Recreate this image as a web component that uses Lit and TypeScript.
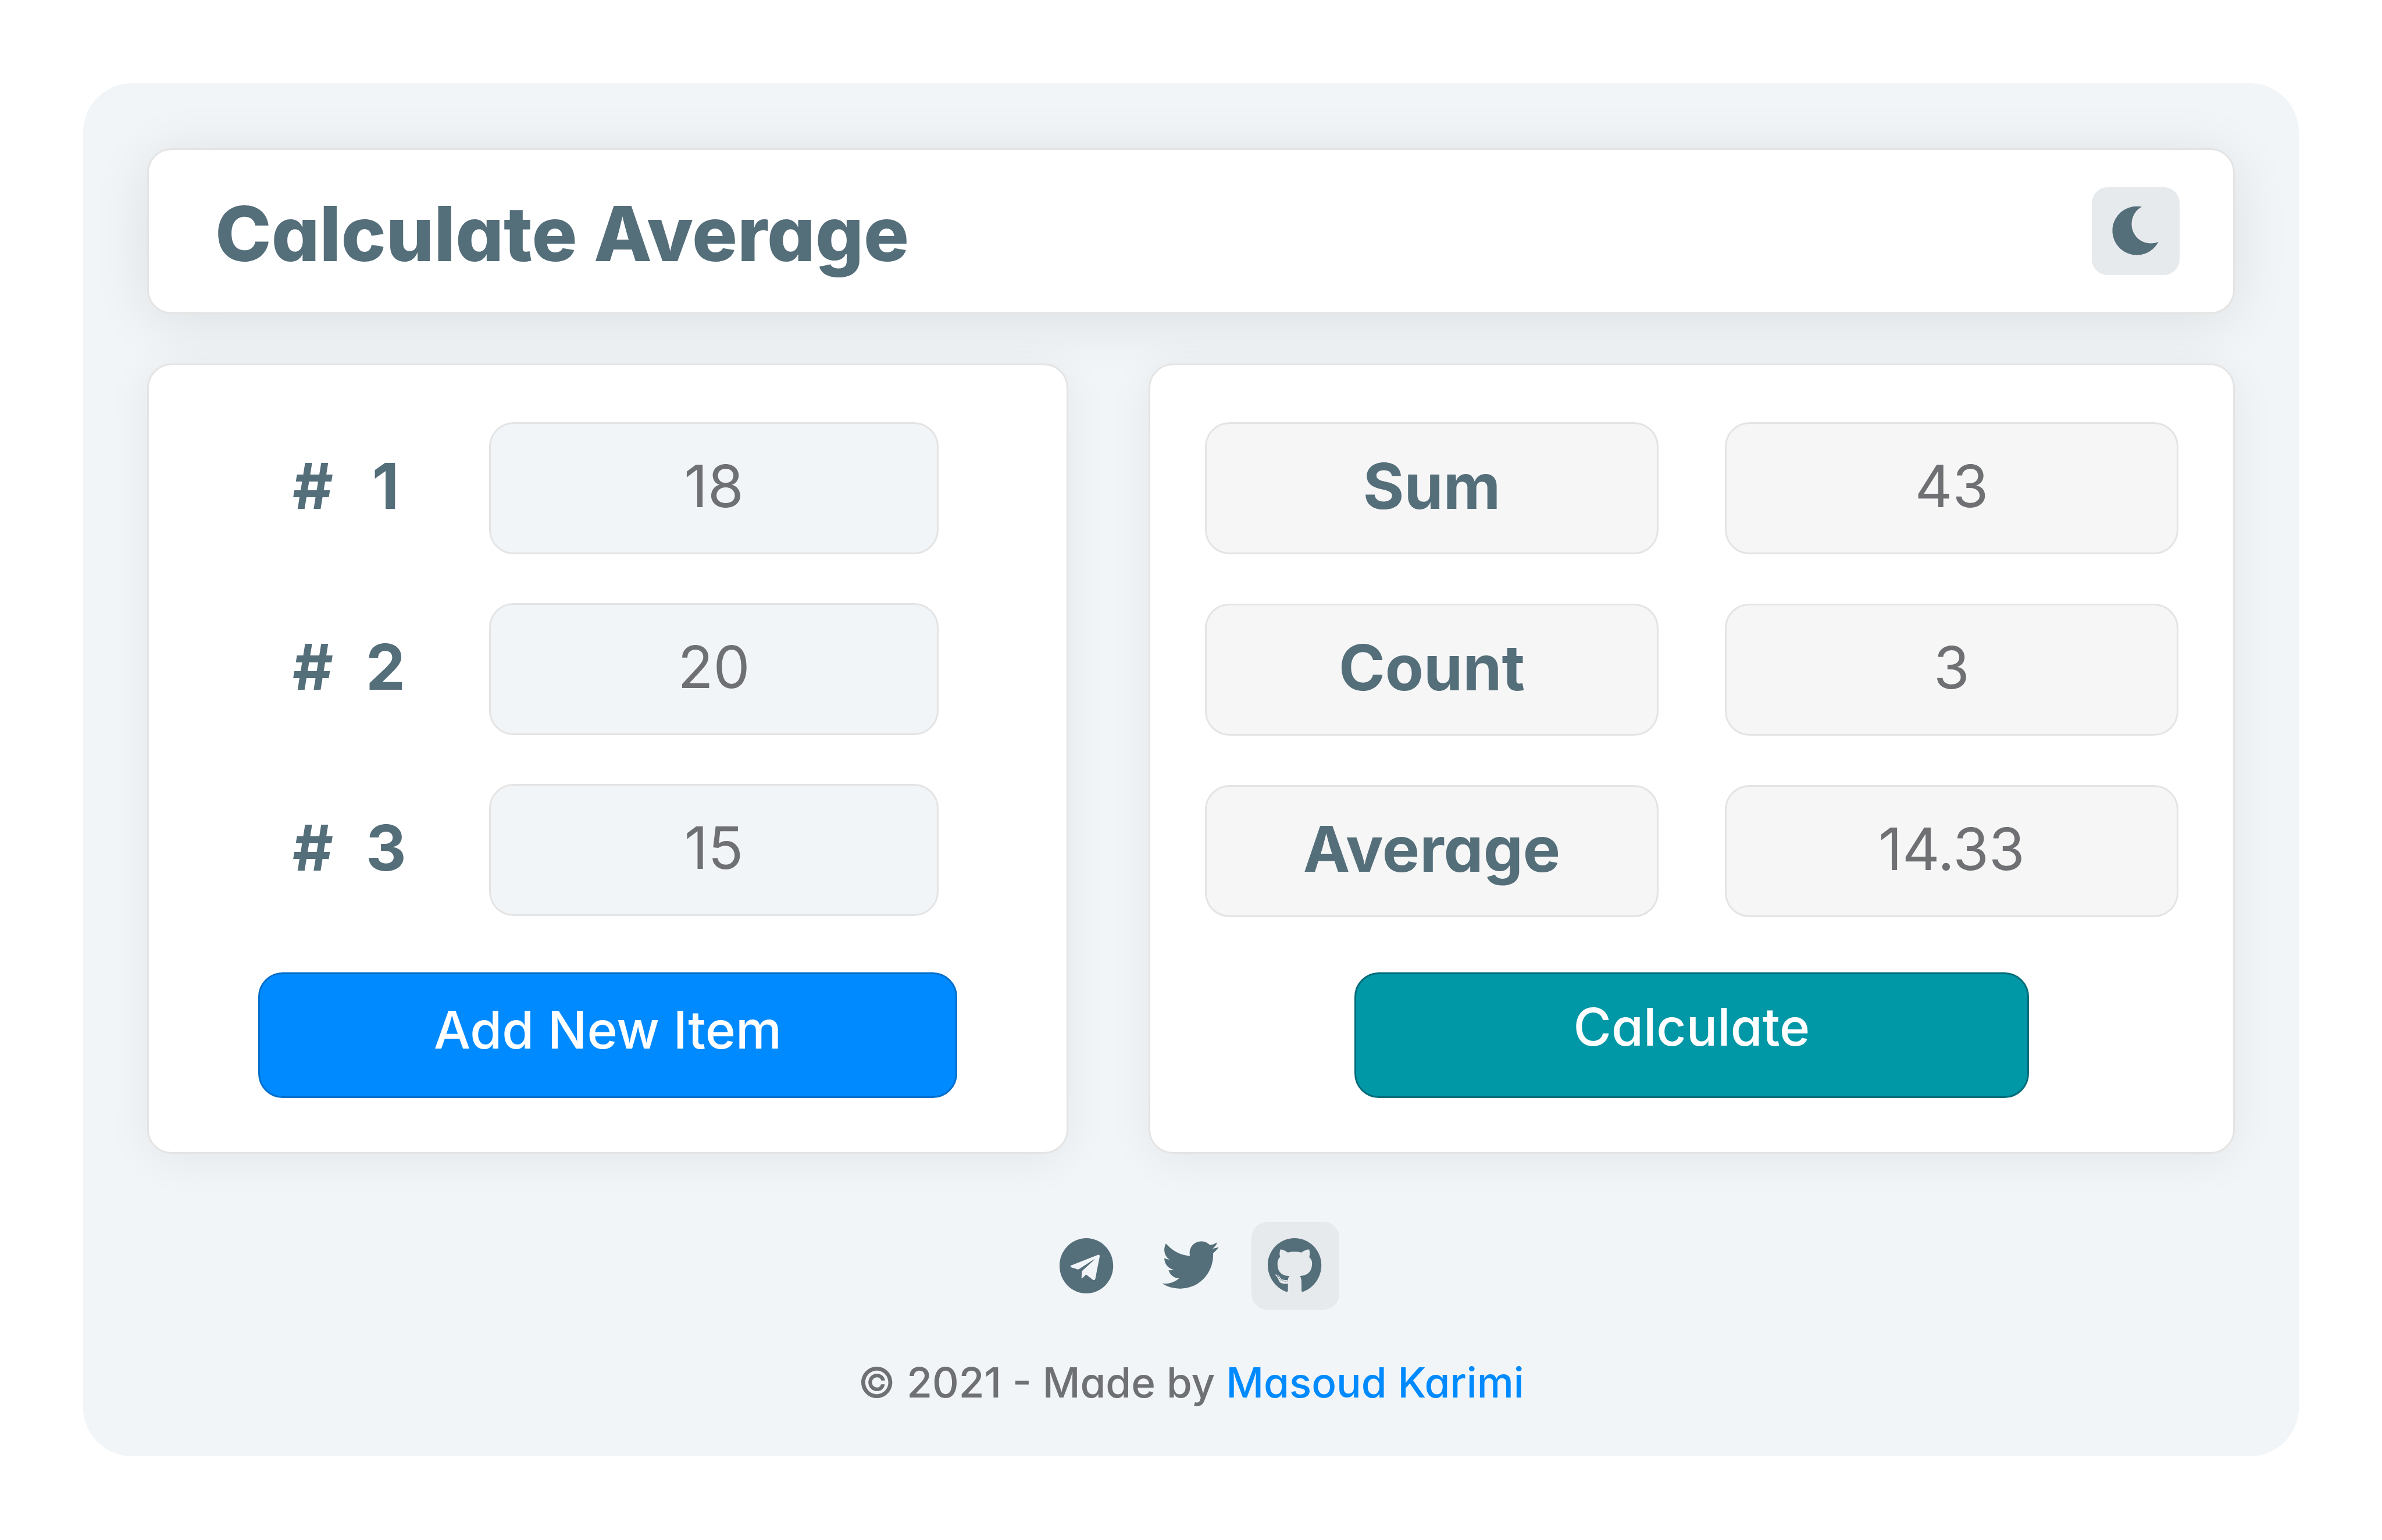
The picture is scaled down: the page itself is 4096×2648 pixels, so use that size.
import { LitElement, html, css, svg } from 'lit';
import { customElement, state } from 'lit/decorators.js';

const moonIcon = svg`<path d="M123 48A60 60 0 1 0 164 134A47 47 0 0 1 98 91C98 73 107 56 123 48Z"/>`;

const telegramIcon = svg`<path fill-rule="evenodd" d="M228 60C337 60 426 151 426 264S337 468 228 468S30 377 30 264S119 60 228 60Z
  M114 262C109 265 109 273 114 275L165 291Q168 292 171 290L284 217C288 215 289 217 287 219L198 300Q195 303 195 306L192 352Q192 359 197 356L223 331Q226 328 229 331L274 366C283 372 292 369 294 359L326 196C328 185 322 181 313 183Z"/>`;

const twitterIcon = svg`<path d="M815 100C860 152 925 188 992 191C990 184 990 176 990 168C990 121 1028 84 1077 84C1101 84 1124 95 1140 112C1159 108 1177 101 1194 91C1187 110 1174 127 1157 138C1174 136 1190 132 1205 126C1194 143 1180 158 1163 171C1170 300 1076 432 918 432C871 432 826 419 788 395C833 399 877 386 912 357C875 356 845 331 834 296C847 298 860 297 872 293C832 285 803 249 803 207C815 213 828 217 841 218C803 192 792 142 815 100Z"/>`;

const githubIcon = svg`<path d="M293 546C215 518 156 440 156 348C156 239 245 150 354 150C463 150 552 239 552 348C552 440 495 518 418 545Q405 547 405 536V487C405 460 404 442 392 430C440 426 483 407 483 335C483 316 475 302 462 290C468 272 468 252 462 235C455 232 435 236 404 256C372 248 337 248 304 256C275 236 255 232 249 235C243 252 242 272 247 290C234 302 228 316 228 340C228 407 268 428 317 430C310 437 306 446 305 458C285 461 262 459 250 444C240 424 224 413 207 421C222 428 230 445 238 462C247 484 270 490 305 486V536Q304 548 293 546Z"/>
  ${[[228, 427], [235, 435], [243, 446], [254, 458], [268, 465], [284, 468], [300, 466]].map(
    ([x, y]) => svg`<circle cx=${x} cy=${y} r="4"/>`,
  )}`;

@customElement('app-root')
export class AppRoot extends LitElement {
  static styles = css`
    :host {
      display: block;
      box-sizing: border-box;
      min-height: 100vh;
      padding: 143px;
      background: #fff;
      color: #6f7073;
      font-family: Inter, 'Open Sans', sans-serif;
      font-feature-settings: 'cv11';
      font-size: 100px;
      line-height: 120px;
    }
    *,
    *::before {
      box-sizing: border-box;
    }
    .panel {
      display: flex;
      flex-direction: column;
      padding: 112px 110px 77px;
      border-radius: 84px;
      background: #f1f5f8;
    }
    .card {
      border: 3px solid #e4e4e4;
      border-radius: 42px;
      background: #fff;
      box-shadow: 0 10px 80px rgba(0, 0, 0, 0.06);
    }
    .header {
      display: flex;
      align-items: center;
      justify-content: space-between;
      padding: 64px 92px 64px 114px;
      box-shadow: 0 12px 100px rgba(0, 0, 0, 0.09);
    }
    .title {
      margin: 0;
      padding-top: 8px;
      color: #546e7a;
      font-size: 130px;
      font-weight: 800;
      line-height: 140px;
    }
    .icon-button {
      display: block;
      width: 151px;
      height: 151px;
      padding: 0;
      border: 0;
      border-radius: 27px;
      background: transparent;
      color: #546e7a;
    }
    .icon-button.active {
      background: #e6eaed;
    }
    .icon {
      display: block;
      width: 100%;
      height: 100%;
      fill: currentColor;
    }
    .columns {
      display: grid;
      grid-template-columns: 1584fr 1868fr;
      gap: 138px;
      margin-top: 85px;
    }
    .column {
      display: flex;
      flex-direction: column;
      align-items: center;
      justify-content: space-between;
      gap: 95px;
      padding: 98px 94px 93px;
    }
    .items {
      display: grid;
      align-self: stretch;
      gap: 84px;
      padding: 0 126px 0 153px;
    }
    .item {
      display: grid;
      grid-template-columns: 338px 1fr;
      align-items: center;
    }
    .results {
      display: grid;
      grid-template-columns: 1fr 1fr;
      align-self: stretch;
      gap: 85px 114px;
    }
    .label {
      color: #546e7a;
      font-size: 108px;
      font-weight: 700;
    }
    .index {
      display: flex;
      gap: 56px;
      padding-bottom: 8px;
    }
    .number {
      min-width: 68px;
      text-align: center;
    }
    .field {
      display: flex;
      align-items: center;
      justify-content: center;
      width: 100%;
      min-width: 0;
      height: 227px;
      padding: 0 24px 8px;
      border: 3px solid #e4e4e4;
      border-radius: 42px;
      background: #f6f6f6;
      text-align: center;
    }
    .entry {
      background: #f1f5f8;
      color: inherit;
      font: inherit;
      font-feature-settings: inherit;
      outline: none;
    }
    .action {
      max-width: 100%;
      height: 216px;
      border: 3px solid;
      border-radius: 42px;
      color: #fff;
      font: inherit;
      font-feature-settings: inherit;
      font-size: 89px;
      font-weight: 500;
    }
    .add {
      width: 1202px;
      padding: 0 0 18px;
      border-color: #006fcc;
      background: #008aff;
    }
    .calculate {
      width: 1160px;
      padding: 0 0 28px;
      border-color: #006d79;
      background: #0097a7;
    }
    .social {
      display: flex;
      justify-content: center;
      gap: 28px;
      margin-top: 117px;
    }
    .credit {
      margin: 75px 0 0;
      font-size: 71px;
      font-weight: 500;
      line-height: 100px;
      text-align: center;
    }
    .credit-link {
      color: #008aff;
      text-decoration: none;
    }
  `;

  @state() private items: string[] = ['18', '20', '15'];
  @state() private sum = 43;
  @state() private count = 3;

  private setItem(index: number, event: Event) {
    const value = (event.target as HTMLInputElement).value;
    this.items = this.items.map((item, i) => (i === index ? value : item));
  }

  private addItem() {
    this.items = [...this.items, ''];
  }

  private calculate() {
    const numbers = this.items.filter((item) => item.trim() !== '').map(Number);
    this.sum = numbers.reduce((total, n) => total + n, 0);
    this.count = numbers.length;
  }

  render() {
    const average = this.count ? (this.sum / this.count).toFixed(2) : '0';
    const results = [
      { id: 'sum', name: 'Sum', value: this.sum },
      { id: 'count', name: 'Count', value: this.count },
      { id: 'average', name: 'Average', value: average },
    ];
    return html`
      <div class="panel">
        <header class="card header">
          <h1 class="title">Calculate Average</h1>
          <button class="icon-button active" type="button" aria-label="Dark mode">
            <svg class="icon" viewBox="0 0 216 216" aria-hidden="true">${moonIcon}</svg>
          </button>
        </header>

        <main class="columns">
          <section class="card column">
            <div class="items">
              ${this.items.map(
                (item, i) => html`
                  <div class="item">
                    <label class="label index" for="item-${i}"><span>#</span><span class="number">${i + 1}</span></label>
                    <input
                      class="field entry"
                      id="item-${i}"
                      type="text"
                      inputmode="decimal"
                      .value=${item}
                      @input=${(event: Event) => this.setItem(i, event)}
                    />
                  </div>
                `,
              )}
            </div>
            <button class="action add" type="button" @click=${this.addItem}>Add New Item</button>
          </section>

          <section class="card column">
            <div class="results">
              ${results.map(
                ({ id, name, value }) => html`
                  <label class="field label" for=${id}>${name}</label>
                  <output class="field" id=${id}>${value}</output>
                `,
              )}
            </div>
            <button class="action calculate" type="button" @click=${this.calculate}>Calculate</button>
          </section>
        </main>

        <footer>
          <nav class="social">
            <a class="icon-button" href="#telegram" aria-label="Telegram">
              <svg class="icon" viewBox="-90 -60 648 648" aria-hidden="true">${telegramIcon}</svg>
            </a>
            <a class="icon-button" href="#twitter" aria-label="Twitter">
              <svg class="icon" viewBox="678 -60 648 648" aria-hidden="true">${twitterIcon}</svg>
            </a>
            <a class="icon-button active" href="#github" aria-label="GitHub">
              <svg class="icon" viewBox="36 30 648 648" aria-hidden="true">${githubIcon}</svg>
            </a>
          </nav>
          <p class="credit">© 2021 - Made by <a class="credit-link" href="#author">Masoud Karimi</a></p>
        </footer>
      </div>
    `;
  }
}
